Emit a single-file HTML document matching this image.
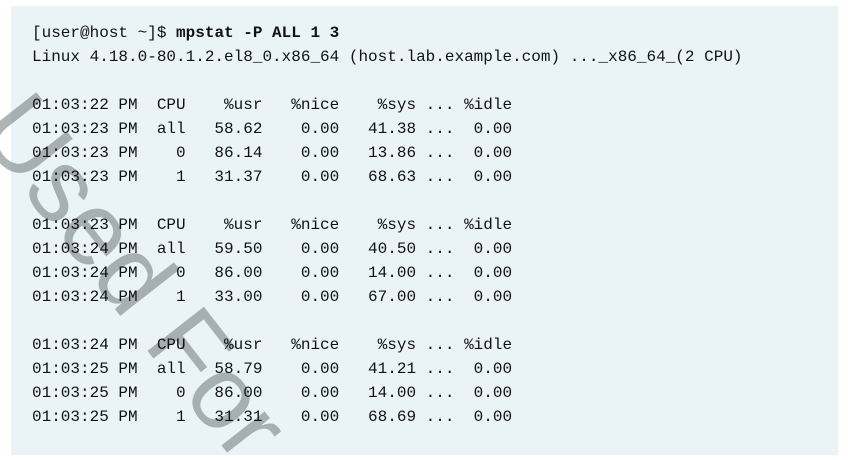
<!DOCTYPE html>
<html><head><style>
html,body{margin:0;padding:0;background:#fff;width:848px;height:460px;overflow:hidden;position:relative}
.box{position:absolute;left:11px;top:6px;width:827px;height:449px;background:#eaf4f7}
svg{position:absolute;left:0;top:0;overflow:hidden}
pre{position:absolute;left:32px;top:21px;margin:0;font-family:"Liberation Mono",monospace;font-size:16px;line-height:24px;color:#111}
b{font-weight:bold}
</style></head><body>
<div class="box"></div>
<svg width="848" height="460"><text x="-25" y="130" transform="rotate(52 -25 130)" font-family="Liberation Sans, sans-serif" font-size="104" fill="rgba(110,118,120,0.55)">Used For</text></svg>
<pre>[user@host ~]$ <b>mpstat -P ALL 1 3</b>
Linux 4.18.0-80.1.2.el8_0.x86_64 (host.lab.example.com) ..._x86_64_(2 CPU)

01:03:22 PM  CPU    %usr   %nice    %sys ... %idle
01:03:23 PM  all   58.62    0.00   41.38 ...  0.00
01:03:23 PM    0   86.14    0.00   13.86 ...  0.00
01:03:23 PM    1   31.37    0.00   68.63 ...  0.00

01:03:23 PM  CPU    %usr   %nice    %sys ... %idle
01:03:24 PM  all   59.50    0.00   40.50 ...  0.00
01:03:24 PM    0   86.00    0.00   14.00 ...  0.00
01:03:24 PM    1   33.00    0.00   67.00 ...  0.00

01:03:24 PM  CPU    %usr   %nice    %sys ... %idle
01:03:25 PM  all   58.79    0.00   41.21 ...  0.00
01:03:25 PM    0   86.00    0.00   14.00 ...  0.00
01:03:25 PM    1   31.31    0.00   68.69 ...  0.00</pre>
</body></html>
